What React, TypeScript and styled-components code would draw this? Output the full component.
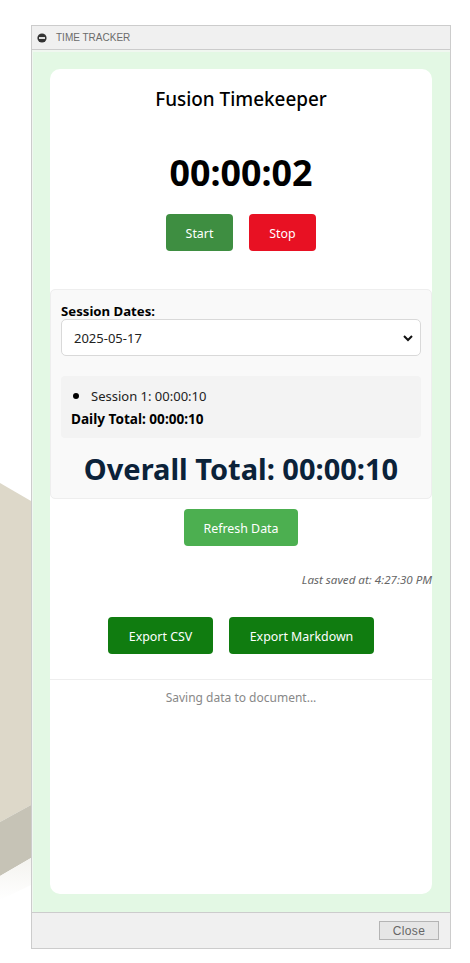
import styled, { createGlobalStyle } from 'styled-components';

const GlobalStyle = createGlobalStyle`
    html, body {
        margin: 0;
        padding: 0;
        height: 963px;
        overflow: hidden;
        background: #ffffff;
        font-family: "Noto Sans", "Open Sans", sans-serif;
    }
`

const Desktop = styled.div`
    position: relative;
    width: 470px;
    height: 963px;
    padding: 25px 0 0 31px;
    box-sizing: border-box;
`

const ModelBackdrop = styled.svg`
    position: absolute;
    left: 0;
    top: 0;
`

const Dialog = styled.div`
    position: relative;
    width: 420px;
    height: 924px;
    box-sizing: border-box;
    border: 1px solid #cccccc;
    background: #f0f0f0;
    display: flex;
    flex-direction: column;
`

const TitleBar = styled.div`
    height: 23px;
    flex: none;
    border-bottom: 1px solid #cccccc;
    display: flex;
    align-items: center;
    gap: 9px;
    padding-left: 5px;
    font-family: "Liberation Sans", Arial, sans-serif;
    font-size: 10px;
    color: #6b6b6b;
`

const DialogBody = styled.div`
    flex: 1;
    min-height: 0;
    background: #e3f8e4;
    border-top: 2px solid #f0f7f0;
    border-left: 1px solid #f0f7f0;
    padding: 17px 18px 18px 17px;
    display: flex;
`

const Card = styled.div`
    flex: 1;
    background: #ffffff;
    border-radius: 10px;
    display: flex;
    flex-direction: column;
    align-items: center;
`

const Title = styled.h1`
    margin: 17px 0 0 0;
    font-size: 18.9px;
    line-height: 26px;
    font-weight: 500;
    color: #000000;
`

const Timer = styled.div`
    margin-top: 36px;
    font-size: 35.8px;
    line-height: 48px;
    font-weight: 700;
    color: #000000;
`

const ButtonRow = styled.div<{ $top: number }>`
    display: flex;
    justify-content: center;
    gap: 16px;
    margin-top: ${(p) => p.$top}px;
`

const Button = styled.button<{ $bg: string; $width: number }>`
    width: ${(p) => p.$width}px;
    height: 37px;
    padding: 2px 0 0 0;
    border: none;
    border-radius: 4px;
    background: ${(p) => p.$bg};
    color: #ffffff;
    font-family: inherit;
    font-size: 12.4px;
`

const SessionPanel = styled.section`
    align-self: stretch;
    box-sizing: border-box;
    height: 210px;
    margin-top: 38px;
    padding: 13px 10px 0 10px;
    border: 1px solid #eeeeee;
    border-radius: 5px;
    background: #f9f9f9;
`

const FieldLabel = styled.label`
    display: block;
    font-size: 13.2px;
    line-height: 16px;
    font-weight: 700;
    color: #000000;
`

const DateSelect = styled.div`
    box-sizing: border-box;
    height: 37px;
    padding: 0 6px 0 12px;
    border: 1px solid #d9d9d9;
    border-radius: 5px;
    background: #ffffff;
    display: flex;
    align-items: center;
    justify-content: space-between;
    font-size: 13px;
    color: #222222;
`

const SessionBox = styled.div`
    box-sizing: border-box;
    height: 62px;
    margin-top: 20px;
    padding: 8px 10px 0 10px;
    border-radius: 4px;
    background: #f3f3f3;
`

const SessionList = styled.ul`
    margin: 0;
    padding: 0 0 0 20px;
    font-size: 13px;
    line-height: 22px;
    color: #222222;

    li::marker {
        color: #000000;
        font-size: 16px;
    }
`

const DailyTotal = styled.div`
    margin-top: 1px;
    font-size: 13.6px;
    line-height: 22px;
    font-weight: 700;
    color: #000000;
`

const OverallTotal = styled.div`
    margin-top: 11px;
    text-align: center;
    font-size: 29px;
    line-height: 40px;
    font-weight: 700;
    color: #0b2239;
`

const RefreshWrap = styled.div`
    margin-top: 10px;
`

const SavedAt = styled.div`
    align-self: flex-end;
    margin-top: 26px;
    font-size: 11.6px;
    line-height: 16px;
    font-style: italic;
    color: #666666;
`

const Divider = styled.hr`
    align-self: stretch;
    margin: 25px 0 0 0;
    border: none;
    border-top: 1px solid #eeeeee;
`

const StatusText = styled.div`
    margin-top: 10px;
    font-size: 12px;
    line-height: 16px;
    color: #888888;
`

const DialogFooter = styled.div`
    height: 36px;
    flex: none;
    border-top: 1px solid #cccccc;
    box-sizing: border-box;
    display: flex;
    align-items: center;
    justify-content: flex-end;
    padding-right: 11px;
`

const CloseButton = styled.button`
    width: 60px;
    height: 19px;
    padding: 0;
    border: 1px solid #b4b4b4;
    background: #e6e6e6;
    color: #666666;
    font-family: "Liberation Sans", Arial, sans-serif;
    font-size: 12px;
    letter-spacing: 0.4px;
`

const App = () => (
    <>
        <GlobalStyle />
        <Desktop>
            <ModelBackdrop width="31" height="963" viewBox="0 0 31 963">
                <defs>
                    <linearGradient id="floorShadow" x1="0" y1="0" x2="0" y2="1">
                        <stop offset="0" stopColor="#f4f3ef" />
                        <stop offset="1" stopColor="#ffffff" />
                    </linearGradient>
                </defs>
                <polygon points="0,483 31,501 31,805 0,822" fill="#ddd8c9" />
                <polygon points="0,822 31,805 31,858 0,876" fill="#c6c3b6" />
                <polygon points="0,876 31,858 31,885 0,900" fill="url(#floorShadow)" />
            </ModelBackdrop>
            <Dialog>
                <TitleBar>
                    <svg width="10" height="10" viewBox="0 0 10 10">
                        <circle cx="5" cy="5" r="4.6" fill="#333333" />
                        <rect x="2" y="4.1" width="6" height="1.8" fill="#f0f0f0" />
                    </svg>
                    TIME TRACKER
                </TitleBar>
                <DialogBody>
                    <Card>
                        <Title>Fusion Timekeeper</Title>
                        <Timer>00:00:02</Timer>
                        <ButtonRow $top={18}>
                            <Button $bg="#3e8e41" $width={67}>Start</Button>
                            <Button $bg="#e81123" $width={67}>Stop</Button>
                        </ButtonRow>
                        <SessionPanel>
                            <FieldLabel>Session Dates:</FieldLabel>
                            <DateSelect>
                                2025-05-17
                                <svg width="12" height="12" viewBox="0 0 12 12">
                                    <path d="M2 4l4 4 4-4" fill="none" stroke="#111111" strokeWidth="2" />
                                </svg>
                            </DateSelect>
                            <SessionBox>
                                <SessionList>
                                    <li>Session 1: 00:00:10</li>
                                </SessionList>
                                <DailyTotal>Daily Total: 00:00:10</DailyTotal>
                            </SessionBox>
                            <OverallTotal>Overall Total: 00:00:10</OverallTotal>
                        </SessionPanel>
                        <RefreshWrap>
                            <Button $bg="#4caf50" $width={114}>Refresh Data</Button>
                        </RefreshWrap>
                        <SavedAt>Last saved at: 4:27:30 PM</SavedAt>
                        <ButtonRow $top={29}>
                            <Button $bg="#107c10" $width={105}>Export CSV</Button>
                            <Button $bg="#107c10" $width={145}>Export Markdown</Button>
                        </ButtonRow>
                        <Divider />
                        <StatusText>Saving data to document...</StatusText>
                    </Card>
                </DialogBody>
                <DialogFooter>
                    <CloseButton>Close</CloseButton>
                </DialogFooter>
            </Dialog>
        </Desktop>
    </>
);

export default App;
